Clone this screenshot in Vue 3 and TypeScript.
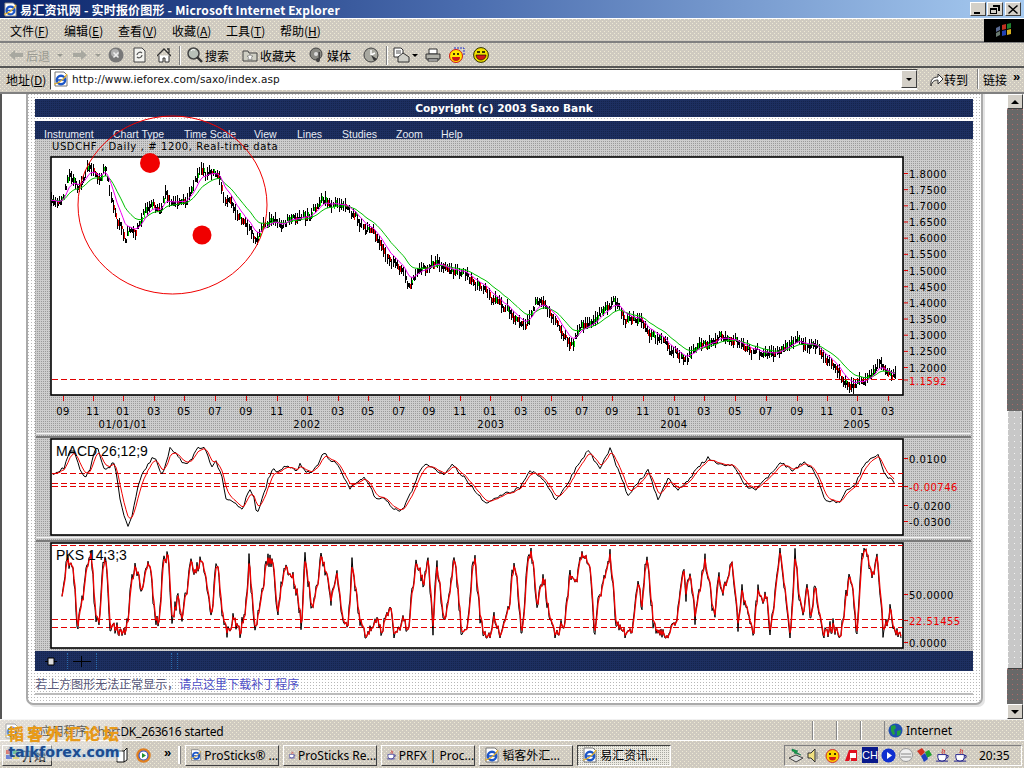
<script setup lang="ts">
// USD/CHF applet inside an old IE window; series come from points read off the chart
type Pt = [number, number]

function makeRng(seed: number) {
  let s = seed
  return () => {
    s = (s + 0x6d2b79f5) | 0
    let t = Math.imul(s ^ (s >>> 15), 1 | s)
    t = (t + Math.imul(t ^ (t >>> 7), 61 | t)) ^ t
    return ((t ^ (t >>> 14)) >>> 0) / 4294967296
  }
}

function at(pts: Pt[], x: number) {
  for (let i = 1; i < pts.length; i++) {
    if (x <= pts[i][0]) {
      const [x0, y0] = pts[i - 1]
      const [x1, y1] = pts[i]
      return y0 + ((y1 - y0) * (x - x0)) / (x1 - x0 || 1)
    }
  }
  return pts[pts.length - 1][1]
}

function ema(values: number[], n: number) {
  const k = 2 / (n + 1)
  let cur = values[0]
  return values.map((v) => (cur = cur + (v - cur) * k))
}

function line(xs: number[], ys: number[]) {
  return xs.map((x, i) => `${i ? 'L' : 'M'}${x} ${ys[i].toFixed(1)}`).join('')
}

const pricePts: Pt[] = [
  [51, 200], [60, 198], [68, 178], [72, 180], [78, 190], [88, 170], [92, 178], [100, 182], [105, 170], [108, 190],
  [112, 205], [115, 215], [120, 225], [125, 235], [130, 228], [138, 222], [145, 215], [150, 212], [158, 215], [165, 197],
  [172, 205], [180, 200], [190, 192], [200, 175], [208, 178], [218, 172], [224, 195], [232, 203], [240, 215], [247, 220],
  [253, 232], [256, 240], [262, 228], [270, 222], [280, 220], [290, 218], [300, 222], [310, 218], [322, 205], [335, 203],
  [350, 215], [365, 230], [380, 245], [395, 260], [408, 288], [415, 270], [430, 268], [445, 268], [460, 275], [475, 278],
  [485, 290], [497, 305], [510, 315], [525, 322], [535, 305], [545, 305], [555, 320], [570, 338], [585, 320], [600, 310],
  [612, 297], [625, 320], [640, 322], [655, 335], [670, 355], [682, 358], [695, 345], [715, 340], [732, 332], [745, 345],
  [765, 355], [780, 345], [800, 342], [815, 347], [825, 360], [838, 378], [855, 387], [870, 375], [878, 362], [885, 372], [895, 377],
]

const macdPts: Pt[] = [
  [52, 474], [57, 472], [64, 468], [70, 452], [75, 452], [80, 470], [85, 477], [90, 470], [95, 450], [98, 448], [102, 462], [105, 470],
  [110, 468], [113, 460], [117, 475], [120, 500], [125, 520], [128, 525], [132, 515], [137, 490], [142, 475], [148, 465], [152, 458], [156, 458],
  [160, 470], [163, 475], [167, 460], [170, 448], [175, 452], [180, 460], [185, 465], [192, 458], [198, 448], [203, 447], [208, 455], [212, 468],
  [216, 461], [222, 478], [226, 498], [232, 500], [238, 505], [243, 510], [247, 495], [250, 490], [254, 498], [257, 515], [262, 500], [268, 480],
  [273, 468], [278, 472], [285, 465], [292, 468], [297, 472], [300, 462], [305, 472], [312, 472], [318, 465], [323, 451], [330, 460], [338, 465],
  [345, 480], [350, 488], [358, 482], [365, 478], [370, 485], [375, 500], [385, 498], [395, 510], [403, 510], [412, 490], [420, 470], [427, 463],
  [435, 470], [445, 475], [452, 465], [462, 475], [475, 490], [487, 505], [495, 498], [510, 492], [520, 488], [530, 470], [545, 480], [555, 500],
  [565, 488], [575, 470], [588, 450], [600, 470], [610, 448], [618, 470], [628, 495], [640, 480], [648, 470], [658, 500], [668, 478], [678, 490],
  [690, 478], [700, 465], [708, 458], [720, 465], [732, 465], [745, 485], [755, 490], [770, 475], [780, 462], [792, 470], [805, 462], [815, 472],
  [825, 500], [840, 502], [847, 490], [855, 485], [865, 463], [878, 455], [885, 475], [895, 483],
]

// read from two 3x crops of the lower pane
const pksLeft: Pt[] = [
  [45, 150], [55, 65], [75, 75], [85, 230], [90, 255], [105, 160], [115, 75], [130, 45], [142, 230], [155, 235], [165, 65], [175, 50], [185, 290], [200, 258],
  [225, 295], [240, 225], [250, 110], [265, 75], [280, 170], [290, 95], [305, 70], [322, 250], [335, 235], [345, 60], [360, 40], [372, 240], [390, 170], [400, 235],
  [420, 130], [430, 45], [440, 110], [460, 45], [475, 130], [490, 240], [505, 50], [525, 240], [535, 280], [555, 240], [575, 280], [595, 190], [603, 55], [620, 285],
  [640, 170], [655, 60], [675, 65], [688, 235], [705, 90], [725, 85], [745, 150], [760, 260], [770, 40], [790, 200], [800, 175], [820, 50], [850, 180], [865, 90],
  [885, 260], [900, 262], [912, 65], [925, 170], [942, 280], [960, 290], [985, 225], [1000, 280], [1025, 200], [1040, 290], [1065, 240], [1080, 275], [1095, 130], [1105, 55],
  [1125, 130], [1140, 70], [1155, 265], [1165, 65], [1190, 260], [1220, 45], [1240, 280], [1250, 290], [1260, 240], [1275, 50],
]
const pksRight: Pt[] = [
  [0, 60], [15, 240], [30, 295], [45, 300], [55, 225], [75, 290], [100, 215], [115, 70], [125, 120], [140, 280], [160, 40], [170, 40], [185, 190], [205, 100],
  [225, 250], [240, 285], [270, 240], [285, 90], [300, 140], [320, 50], [345, 70], [358, 285], [370, 170], [385, 130], [405, 40], [425, 270], [440, 250], [455, 290],
  [475, 250], [490, 120], [500, 200], [515, 30], [535, 260], [550, 285], [575, 290], [605, 245], [625, 70], [632, 170], [645, 90], [660, 240], [690, 55], [720, 250],
  [730, 90], [740, 170], [770, 55], [790, 265], [800, 145], [815, 210], [835, 285], [850, 130], [860, 190], [875, 155], [885, 290], [915, 30], [945, 285], [960, 45],
  [970, 150], [985, 250], [995, 135], [1005, 240], [1020, 140], [1045, 285], [1075, 255], [1095, 295], [1120, 120], [1130, 125], [1145, 280], [1160, 45], [1175, 45], [1192, 115],
  [1205, 30], [1225, 290], [1245, 200], [1255, 280],
]
const pksPts: Pt[] = [
  ...pksLeft.map(([x, y]): Pt => [48 + x / 3, 540 + y / 3]),
  ...pksRight.map(([x, y]): Pt => [475 + x / 3, 540 + y / 3]),
]

const rng = makeRng(20050335)
const priceXs = Array.from({ length: 423 }, (_, i) => 51 + i * 2)
let drift = 0
const prices = priceXs.map((x) => {
  drift = drift * 0.78 + (rng() - 0.5) * 7
  return at(pricePts, x) + drift
})
const wick: string[] = []
const redBars: string[] = []
const greenBars: string[] = []
priceXs.forEach((x, i) => {
  const y = Math.round(prices[i])
  const up = 2 + Math.round(rng() * 6)
  const down = 2 + Math.round(rng() * 6)
  wick.push(`M${x + 0.5} ${y - up}V${y + down}`)
  if (i % 3 !== 2) wick.push(`M${x + 1.5} ${y - 1}V${y + 3}`)
  if (rng() < 0.55) {
    const falling = i > 0 && prices[i] > prices[i - 1]
    const len = 3 + Math.round(rng() * 4)
    ;(falling ? redBars : greenBars).push(`M${x + 1.5} ${y - 2}v${len}`)
  }
})
const wickPath = wick.join('')
const redPath = redBars.join('')
const greenPath = greenBars.join('')
const maFast = line(priceXs, ema(prices, 7))
const maSlow = line(priceXs, ema(prices, 16))

const macdXs = Array.from({ length: 422 }, (_, i) => 52 + i * 2)
const macdRaw = macdXs.map((x) => at(macdPts, x) + (rng() - 0.5) * 3)
const macdPath = line(macdXs, macdRaw)
const macdSignal = line(macdXs, ema(macdRaw, 4))

const pksXs = Array.from({ length: 840 }, (_, i) => 62 + i)
const pksRaw = pksXs.map((x) => Math.min(638, Math.max(548, at(pksPts, x) + (rng() - 0.5) * 14)))
const pksPath = line(pksXs, pksRaw)
const pksSignal = line(pksXs, ema(pksRaw, 2))

const priceAxis = ['1.8000', '1.7500', '1.7000', '1.6500', '1.6000', '1.5500', '1.5000', '1.4500', '1.4000', '1.3500', '1.3000', '1.2500', '1.2000'].map(
  (label, i) => ({ label, y: 173.5 + i * 16.17 }),
)

const monthXs = [63, 93, 123, 154, 184, 215, 246, 277, 307, 338, 368, 399, 429, 460, 490, 521, 551, 582, 612, 643, 674, 704, 735, 766, 797, 827, 857, 888]
const monthNames = ['09', '11', '01', '03', '05', '07']
const months = monthXs.map((x, i) => ({ x, label: monthNames[i % 6] }))
const years = [
  { x: 123, label: '01/01/01' },
  { x: 307, label: '2002' },
  { x: 491, label: '2003' },
  { x: 674, label: '2004' },
  { x: 857, label: '2005' },
]

const menuItems = [
  { name: '文件', key: 'F' },
  { name: '编辑', key: 'E' },
  { name: '查看', key: 'V' },
  { name: '收藏', key: 'A' },
  { name: '工具', key: 'T' },
  { name: '帮助', key: 'H' },
]

const chartMenu = ['Instrument', 'Chart Type', 'Time Scale', 'View', 'Lines', 'Studies', 'Zoom', 'Help']

const tasks = [
  { label: 'ProSticks® ...', icon: 'ie', active: false },
  { label: 'ProSticks Re...', icon: 'java', active: false },
  { label: 'PRFX | Proc...', icon: 'java', active: false },
  { label: '韬客外汇...', icon: 'ie', active: false },
  { label: '易汇资讯...', icon: 'ie', active: true },
]
</script>

<template>
  <div class="screen">
    <svg class="defs" width="0" height="0">
      <defs>
        <symbol id="ie" viewBox="0 0 16 16">
          <path d="M2 1h9l3 3v11H2z" fill="#fff" stroke="#777" />
          <circle cx="8" cy="9" r="4.2" fill="none" stroke="#1c56c8" stroke-width="2.4" />
          <path d="M4 9h8" stroke="#1c56c8" stroke-width="1.6" />
          <path d="M1 13C4 13 12 8 14 3" fill="none" stroke="#e8b020" stroke-width="1.2" />
        </symbol>
        <symbol id="java" viewBox="0 0 16 16">
          <path d="M8 1c2 2-2 3 0 5M10 2c1 1.500-1 2 0 4" fill="none" stroke="#d02020" />
          <path d="M3 7h9v3a4 4 0 0 1-4 4H7a4 4 0 0 1-4-4z" fill="#fff" stroke="#20208c" />
          <path d="M12 8h2v2l-2 1M1 14h13" fill="none" stroke="#20208c" />
        </symbol>
      </defs>
    </svg>

    <header class="titlebar">
      <svg class="title-icon" width="15" height="15"><use href="#ie" /></svg>
      <span class="title-text">易汇资讯网 - 实时报价图形 - Microsoft Internet Explorer</span>
      <div class="win-buttons">
        <button class="win-btn">
          <svg width="10" height="9"><path d="M1 7h6v2H1z" /></svg>
        </button>
        <button class="win-btn">
          <svg width="10" height="9"><path d="M3 0h7v6H8V2H3zM0 3h7v6H0zm1 2v3h5V5z" fill-rule="evenodd" /></svg>
        </button>
        <button class="win-btn close">
          <svg width="10" height="9"><path d="M1 0l4 3.500L9 0l1 1-4 3.500L10 8 9 9 5 5.500 1 9 0 8l4-3.500L0 1z" /></svg>
        </button>
      </div>
    </header>

    <nav class="menubar chrome">
      <span v-for="m in menuItems" :key="m.key" class="menu-item">{{ m.name }}(<u>{{ m.key }}</u>)</span>
      <div class="flag-box">
        <svg width="18" height="14" viewBox="0 0 18 14">
          <path d="M1 5l4-2v4l-4 2z" fill="#5a6a90" />
          <path d="M1 10l4-2v4l-4 2z" fill="#6a7a70" />
          <path d="M7 2l4-1v5l-4 1z" fill="#c03020" />
          <path d="M12 1l4-1v5l-4 1z" fill="#208030" />
          <path d="M7 8l4-1v5l-4 1z" fill="#2040b0" />
          <path d="M12 7l4-1v5l-4 1z" fill="#d8b020" />
        </svg>
      </div>
    </nav>

    <div class="toolbar chrome">
      <svg class="ml9" width="14" height="12" viewBox="0 0 14 12"><path d="M0 6l6-5v3h8v4H6v3z" fill="#a8a8a0" /></svg>
      <span class="tool-label off ml3">后退</span>
      <span class="caret ml7"></span>
      <svg class="ml10" width="14" height="12" viewBox="0 0 14 12"><path d="M14 6L8 1v3H0v4h8v3z" fill="#a8a8a0" /></svg>
      <span class="caret ml8"></span>
      <svg class="ml7" width="16" height="16" viewBox="0 0 16 16">
        <circle cx="8" cy="8" r="7.500" fill="#787878" />
        <circle cx="7" cy="6" r="4" fill="#b0b0b0" />
        <path d="M5.500 5.500l5 5m0-5l-5 5" stroke="#eee" stroke-width="1.500" />
      </svg>
      <svg class="ml9" width="13" height="16" viewBox="0 0 13 16">
        <path d="M1 1h8l3 3v11H1z" fill="#f4f4f0" stroke="#444" />
        <path d="M4 8a3 3 0 0 1 5-2M9 8a3 3 0 0 1-5 2" fill="none" stroke="#555" stroke-width="1.200" />
      </svg>
      <svg class="ml11" width="14" height="15" viewBox="0 0 14 15">
        <path d="M0 8l7-7 7 7M10 1h2v4" fill="none" stroke="#333" stroke-width="1.300" />
        <path d="M2 7.500V14h4v-4h2v4h4V7.500" fill="#fff" stroke="#333" />
      </svg>
      <span class="tool-sep ml8"></span>
      <svg class="ml7" width="16" height="16" viewBox="0 0 16 16">
        <circle cx="6.500" cy="6.500" r="5.500" fill="#b8c0b8" stroke="#444" stroke-width="1.500" />
        <path d="M4 4a3 3 0 0 1 4-1" fill="none" stroke="#fff" />
        <path d="M10 10l5 5" stroke="#333" stroke-width="2.400" />
      </svg>
      <span class="tool-label ml2">搜索</span>
      <svg class="ml13" width="16" height="14" viewBox="0 0 16 14">
        <path d="M1 3h5l1 2h8v8H1z" fill="#cfcfc4" stroke="#444" />
        <path d="M8 6l1 2h2l-1.500 1.500L10 12l-2-1-2 1 .500-2.500L5 8h2z" fill="#fff" stroke="#555" stroke-width=".5" />
      </svg>
      <span class="tool-label ml2">收藏夹</span>
      <svg class="ml13" width="16" height="16" viewBox="0 0 16 16">
        <circle cx="7" cy="7" r="6" fill="#8a8a84" stroke="#444" />
        <circle cx="7" cy="7" r="2" fill="#ddd" />
        <path d="M11 5v8a2 2 0 1 1-1.500-1.800V5z" fill="#444" />
      </svg>
      <span class="tool-label ml2">媒体</span>
      <svg class="ml12" width="16" height="16" viewBox="0 0 16 16">
        <circle cx="8" cy="8" r="7" fill="#a8a8a0" stroke="#444" />
        <path d="M8 8V3M8 8l4-2" stroke="#fff" stroke-width="1.400" />
        <path d="M8 8l6 4-3 2z" fill="#333" />
      </svg>
      <span class="tool-sep ml7"></span>
      <svg class="ml6" width="17" height="16" viewBox="0 0 17 16">
        <path d="M1 1h7l2 2v7H1z" fill="#fff" stroke="#333" />
        <path d="M3 4h5M3 6h5" stroke="#555" />
        <path d="M5 15V10l5-4 6 4v5z" fill="#cfcfc8" stroke="#333" />
      </svg>
      <span class="caret dark ml2"></span>
      <svg class="ml7" width="16" height="14" viewBox="0 0 16 14">
        <path d="M4 1h8v5H4z" fill="#fff" stroke="#333" />
        <path d="M1 6h14v5H1z" fill="#b0b0a8" stroke="#333" />
        <path d="M3 11h10v2H3z" fill="#fff" stroke="#333" />
      </svg>
      <svg class="ml8" width="16" height="16" viewBox="0 0 16 16">
        <path d="M5 1h10v7" fill="none" stroke="#2030c8" stroke-dasharray="2 1" />
        <circle cx="7" cy="9" r="6.500" fill="#ffe800" stroke="#d01818" />
        <circle cx="5" cy="7" r="1" />
        <circle cx="9" cy="7" r="1" />
        <path d="M3 10h8a4 4 0 0 1-8 0z" fill="#d01818" />
      </svg>
      <svg class="ml8" width="16" height="16" viewBox="0 0 16 16">
        <circle cx="8" cy="8" r="7.400" fill="#f0e000" stroke="#303000" />
        <path d="M4 5h3M9 5h3" stroke="#000" stroke-width="1.500" />
        <path d="M3 8h10a5 5 0 0 1-10 0z" fill="#d01818" stroke="#000" stroke-width=".6" />
      </svg>
    </div>

    <div class="addressbar chrome">
      <span class="addr-label">地址(<u>D</u>)</span>
      <div class="addr-input">
        <svg width="16" height="16"><use href="#ie" /></svg>
        <span class="addr-url">http://www.ieforex.com/saxo/index.asp</span>
        <button class="addr-drop"><span class="caret dark"></span></button>
      </div>
      <svg class="go-icon" width="14" height="16" viewBox="0 0 14 16">
        <path d="M2 15C1 9 4 6 9 6V3l5 5-5 5V9C6 9 3 10 2 15z" fill="#fff" stroke="#333" />
      </svg>
      <span class="go-label">转到</span>
      <span class="links-sep"></span>
      <span class="links-label">链接</span>
      <span class="links-more">»</span>
    </div>

    <main class="viewport">
      <div class="page">
        <section class="card">
          <h1 class="bank-title">Copyright (c) 2003 Saxo Bank</h1>
          <div class="chart-menu">
            <span v-for="item in chartMenu" :key="item" class="chart-menu-item">{{ item }}</span>
          </div>

          <div class="chart-body">
            <div class="chart-caption">USDCHF , Daily , # 1200, Real-time data</div>

            <svg class="pane" width="938" height="277" viewBox="35 156 938 277">
              <rect x="51" y="157" width="852" height="238" fill="#fff" stroke="#000" stroke-width="1.600" />
              <path :d="wickPath" stroke="#000" />
              <path :d="redPath" stroke="#f00000" />
              <path :d="greenPath" stroke="#00e000" />
              <path :d="maSlow" fill="none" stroke="#00c000" />
              <path :d="maFast" fill="none" stroke="#f000f0" />
              <path d="M52 379.500H903" stroke="#e00000" stroke-dasharray="6 3" />
              <g v-for="t in priceAxis" :key="t.label">
                <path :d="`M904 ${t.y}h4`" stroke="#e00000" />
                <text class="axis" x="909" :y="t.y + 4">{{ t.label }}</text>
              </g>
              <path d="M904 380h4" stroke="#e00000" />
              <text class="axis red" x="909" y="384.500">1.1592</text>
              <g v-for="m in months" :key="m.x">
                <path :d="`M${m.x + 0.5} 396v5`" stroke="#e00000" />
                <text class="axis mid" :x="m.x" y="415">{{ m.label }}</text>
              </g>
              <text v-for="y in years" :key="y.x" class="axis mid" :x="y.x" y="428">{{ y.label }}</text>
            </svg>

            <div class="divider"></div>

            <svg class="pane" width="938" height="99" viewBox="35 438 938 99">
              <rect x="51" y="439" width="852" height="96" fill="#fff" stroke="#000" stroke-width="1.600" />
              <path d="M52 473.500H903M52 483.500H903M52 486.500H903" stroke="#e00000" stroke-dasharray="6 3" />
              <path :d="macdPath" fill="none" stroke="#000" />
              <path :d="macdSignal" fill="none" stroke="#f00000" />
              <text class="pane-name" x="56" y="456">MACD 26;12;9</text>
              <path d="M904 458.500h4M904 486.500h4M904 505.500h4M904 521.500h4" stroke="#e00000" />
              <text class="axis" x="909" y="462.500">0.0100</text>
              <text class="axis red" x="909" y="490.500">-0.00746</text>
              <text class="axis" x="909" y="509.500">-0.0200</text>
              <text class="axis" x="909" y="525.500">-0.0300</text>
            </svg>

            <div class="divider short"></div>

            <svg class="pane" width="938" height="109" viewBox="35 542 938 109">
              <rect x="51" y="543" width="852" height="105" fill="#fff" stroke="#000" stroke-width="1.600" />
              <path d="M52 545.500H903M52 619.500H903M52 627.500H903" stroke="#e00000" stroke-dasharray="6 3" />
              <path :d="pksPath" fill="none" stroke="#000" />
              <path :d="pksSignal" fill="none" stroke="#f00000" stroke-width="1.300" />
              <text class="pane-name" x="56" y="560">PKS 14;3;3</text>
              <path d="M904 594.500h4M904 620.500h4M904 642.500h4" stroke="#e00000" />
              <text class="axis" x="909" y="598.500">50.0000</text>
              <text class="axis red" x="909" y="624.500">22.51455</text>
              <text class="axis" x="909" y="646.500">0.0000</text>
            </svg>
          </div>

          <div class="bottom-bar">
            <span class="bar-slot first">
              <svg width="12" height="9" viewBox="0 0 12 9"><path d="M0 4.500h12" stroke="#000" /><path d="M3 1h6v7H3z" fill="#ddd" stroke="#000" /></svg>
            </span>
            <span class="bar-slot second">
              <svg width="18" height="11" viewBox="0 0 18 11"><path d="M0 5.500h18M8.500 0v11" stroke="#000" /></svg>
            </span>
            <span class="bar-slot third"></span>
            <span class="bar-slot fourth"></span>
          </div>

          <p class="patch-note">若上方图形无法正常显示，<a class="patch-link">请点这里下载补丁程序</a></p>
          <hr class="card-rule" />
        </section>
      </div>

      <aside class="scrollbar">
        <button class="scroll-btn"><span class="arrow up"></span></button>
        <div class="scroll-track top"></div>
        <div class="scroll-thumb"></div>
        <div class="scroll-track bottom"></div>
        <button class="scroll-btn"><span class="arrow"></span></button>
      </aside>
    </main>

    <div class="statusbar chrome">
      <svg class="status-icon" width="16" height="16"><use href="#ie" /></svg>
      <span class="status-text">小应用程序 ChartDK_263616 started</span>
      <span class="status-pane"></span>
      <span class="status-pane"></span>
      <span class="status-pane"></span>
      <span class="status-zone">
        <svg width="15" height="15" viewBox="0 0 15 15">
          <circle cx="7.500" cy="7.500" r="7" fill="#2050b0" />
          <path d="M3 3l4-1 1 3-2 2 1 4-2 1-2-4zM9 8l4-1-1 5-3 1z" fill="#20a040" />
        </svg>
        Internet
      </span>
    </div>

    <footer class="taskbar chrome">
      <button class="start-btn">
        <svg width="14" height="12" viewBox="0 0 14 12"><path d="M0 1h6v4H0z" fill="#d03020" /><path d="M7 1h6v4H7z" fill="#20a030" /><path d="M0 6h6v4H0z" fill="#2040c0" /><path d="M7 6h6v4H7z" fill="#e0c020" /></svg>
        <b>开始</b>
      </button>
      <svg class="quick first" width="12" height="16" viewBox="0 0 12 16"><path d="M1 4h7l3-3v12l-3 2H1z" fill="#fff" stroke="#111" /><path d="M8 4v11" stroke="#111" /></svg>
      <svg class="quick" width="15" height="15" viewBox="0 0 15 15">
        <circle cx="7.500" cy="7.500" r="6" fill="#fff" stroke="#e08020" stroke-width="2.500" />
        <circle cx="7.500" cy="7.500" r="4.500" fill="none" stroke="#3050c0" stroke-width="1.200" />
        <path d="M6 5l4 2.500L6 10z" fill="#209030" />
      </svg>
      <span class="quick-more">»</span>
      <span class="grip"></span>
      <div class="tasks">
        <button v-for="t in tasks" :key="t.label" class="task" :class="{ active: t.active }">
          <svg width="16" height="16"><use :href="`#${t.icon}`" /></svg>
          <span>{{ t.label }}</span>
        </button>
      </div>
      <div class="tray">
        <svg width="16" height="15" viewBox="0 0 16 15"><path d="M1 10l7-3 7 3-7 4z" fill="#ddd" stroke="#444" /><path d="M4 1l6 2-2 1 5 3-7-2 1-1-3-1z" fill="#10a040" stroke="#064" stroke-width=".5" /></svg>
        <svg width="12" height="15" viewBox="0 0 12 15"><path d="M1 5h3l4-4v13l-4-4H1z" fill="#f0e080" stroke="#333" /><path d="M10 4v7" stroke="#777" /></svg>
        <svg class="tray-gap" width="15" height="15" viewBox="0 0 15 15"><circle cx="7.500" cy="8" r="6.500" fill="#fbd400" stroke="#d03030" /><circle cx="5" cy="6" r="1" /><circle cx="10" cy="6" r="1" /><path d="M4 9h7a3.500 3.500 0 0 1-7 0z" fill="#d01818" /></svg>
        <svg width="16" height="14" viewBox="0 0 16 14"><path d="M2 13L6 2h8v11H8V9L6 13z" fill="#e01020" /><path d="M7 5h6v5H7z" fill="#fff" /></svg>
        <span class="ch-tag">CH</span>
        <svg width="15" height="15" viewBox="0 0 15 15"><circle cx="7.500" cy="7.500" r="7" fill="#1030d0" /><path d="M6 4l5 3.500L6 11z" fill="#fff" /></svg>
        <svg width="14" height="14" viewBox="0 0 14 14"><circle cx="7" cy="7" r="6.500" fill="#eee" stroke="#999" /><path d="M2 6h10M2 9h10" stroke="#888" /></svg>
        <svg width="16" height="16" viewBox="0 0 16 16"><path d="M1 4l5-3 3 4-4 4z" fill="#d03020" /><path d="M9 5l4-2 3 5-5 3z" fill="#20a030" /><path d="M5 9l4-3 3 6-4 3z" fill="#2040c0" /></svg>
        <svg width="15" height="15"><use href="#java" /></svg>
        <svg width="15" height="15"><use href="#java" /></svg>
        <span class="clock">20:35</span>
      </div>
    </footer>

    <!-- hand drawn marks that sit on top of the chart -->
    <svg class="marks" width="1024" height="768" viewBox="0 0 1024 768">
      <ellipse cx="172.500" cy="205" rx="94.500" ry="89" fill="none" stroke="#f00000" />
      <circle cx="150" cy="163" r="10" fill="#f00000" />
      <circle cx="202" cy="235" r="9.500" fill="#f00000" />
    </svg>

    <!-- site watermark over the lower left corner -->
    <div class="watermark">
      <span class="wm-cn">韬客外汇论坛</span>
      <span class="wm-en">talkforex.com</span>
    </div>
  </div>
</template>

<style scoped>
.screen {
  position: relative;
  width: 1024px;
  height: 768px;
  overflow: hidden;
  display: flex;
  flex-direction: column;
  font-family: 'Liberation Sans', 'Noto Sans CJK SC', sans-serif;
  font-size: 12px;
  color: #000;
  background: #d4d0c8;
}

.defs {
  position: absolute;
}

u {
  text-decoration: underline;
}

button {
  padding: 0;
  font: inherit;
  color: inherit;
}

/* dithered gif look of the window chrome */
.chrome {
  background-color: #cfcac0;
  background-image: radial-gradient(circle at 0.5px 0.5px, #eee9d4 0.7px, transparent 0.8px),
    radial-gradient(circle at 0.5px 0.5px, #eee9d4 0.7px, transparent 0.8px);
  background-size: 4px 4px;
  background-position: 0 0, 2px 2px;
  flex-shrink: 0;
}

/* Title bar */
.titlebar {
  height: 18px;
  flex-shrink: 0;
  display: flex;
  align-items: center;
  padding: 0 3px;
  background: linear-gradient(90deg, #0a246a 0%, #4a6cae 45%, #a6caf0 100%);
  color: #fff;
}

.title-text {
  margin-left: 2px;
  font-family: 'Noto Sans CJK SC', 'Liberation Sans', sans-serif;
  font-size: 12px;
  font-weight: 700;
  letter-spacing: 0.2px;
  white-space: nowrap;
}

.win-buttons {
  margin-left: auto;
  display: flex;
  gap: 1px;
  margin-right: 0;
}

.win-btn {
  width: 16px;
  height: 14px;
  background: #d4d0c8;
  border: 1px solid;
  border-color: #fff #404040 #404040 #fff;
  display: flex;
  align-items: center;
  justify-content: center;
}

.win-btn.close {
  margin-left: 1px;
}

/* Menu bar */
.menubar {
  height: 25px;
  display: flex;
  align-items: center;
  gap: 15px;
  padding-left: 10px;
  border-top: 1px solid #fff;
  border-bottom: 2px solid #808080;
  box-sizing: border-box;
}

.menu-item {
  width: 39px;
  white-space: nowrap;
  font-family: 'Noto Sans CJK SC', sans-serif;
}

.flag-box {
  margin-left: auto;
  width: 40px;
  height: 23px;
  background: #000;
  display: flex;
  align-items: center;
  justify-content: center;
}

/* Toolbar */
.toolbar {
  height: 25px;
  display: flex;
  align-items: center;
  padding-top: 1px;
  border-bottom: 2px solid #555;
  box-sizing: border-box;
}

.toolbar svg {
  flex-shrink: 0;
}

.tool-label {
  font-family: 'Noto Sans CJK SC', sans-serif;
  white-space: nowrap;
}

.tool-label.off {
  color: #9a9a92;
}

.tool-sep {
  width: 1px;
  height: 19px;
  background: #808080;
  box-shadow: 1px 0 0 #fff;
}

.caret {
  display: inline-block;
  width: 0;
  height: 0;
  border-left: 3px solid transparent;
  border-right: 3px solid transparent;
  border-top: 3px solid #9a9a92;
}

.caret.dark {
  border-top-color: #000;
}

.ml2 { margin-left: 2px; }
.ml3 { margin-left: 3px; }
.ml6 { margin-left: 6px; }
.ml7 { margin-left: 7px; }
.ml8 { margin-left: 8px; }
.ml9 { margin-left: 9px; }
.ml10 { margin-left: 10px; }
.ml11 { margin-left: 11px; }
.ml12 { margin-left: 12px; }
.ml13 { margin-left: 13px; }

/* Address bar */
.addressbar {
  height: 26px;
  display: flex;
  align-items: center;
  padding-left: 6px;
  padding-bottom: 2px;
  box-sizing: border-box;
  border-bottom: 2px solid #808080;
}

.addr-label {
  width: 44px;
  font-family: 'Noto Sans CJK SC', sans-serif;
  white-space: nowrap;
}

.addr-input {
  width: 868px;
  height: 21px;
  box-sizing: border-box;
  background: #fff;
  border: 1px solid;
  border-color: #404040 #d4d0c8 #fff #404040;
  display: flex;
  align-items: center;
  padding-left: 2px;
}

.addr-url {
  margin-left: 3px;
  font-family: 'DejaVu Sans', sans-serif;
  font-size: 10.5px;
  letter-spacing: 0.1px;
  color: #111;
}

.addr-drop {
  margin-left: auto;
  width: 16px;
  height: 18px;
  background: #d4d0c8;
  border: 1px solid;
  border-color: #fff #404040 #404040 #fff;
  display: flex;
  align-items: center;
  justify-content: center;
}

.go-icon {
  margin-left: 11px;
}

.go-label {
  margin-left: 1px;
  font-family: 'Noto Sans CJK SC', sans-serif;
}

.links-sep {
  width: 1px;
  height: 20px;
  margin-left: 9px;
  background: #808080;
  box-shadow: 1px 0 0 #fff;
}

.links-label {
  margin-left: 5px;
  font-family: 'Noto Sans CJK SC', sans-serif;
}

.links-more {
  margin-left: 6px;
  margin-top: -6px;
  font-size: 13px;
  font-weight: 700;
}

/* Browser viewport */
.viewport {
  height: 625px;
  flex-shrink: 0;
  display: flex;
  background: #fff;
  border-left: 2px solid #555;
  box-sizing: border-box;
  overflow: hidden;
}

.page {
  flex: 1;
  min-width: 0;
}

.card {
  width: 957px;
  height: 619px;
  margin: -8px 0 0 24px;
  padding: 11px 8px 0 7px;
  box-sizing: border-box;
  border: 2px solid #aaa;
  border-radius: 7px;
  background-color: #fff;
  background-image: radial-gradient(circle at 0.5px 0.5px, #b8b8b8 0.7px, transparent 0.8px);
  background-size: 3px 3px;
  box-shadow: 2px 2px 0 #e4e4e4;
}

.bank-title {
  margin: 0;
  height: 18px;
  line-height: 18px;
  text-align: center;
  font-family: 'DejaVu Sans', sans-serif;
  font-size: 10.6px;
  font-weight: 700;
  color: #fff;
  background-color: #1d2f60;
  background-image: radial-gradient(circle at 0.5px 0.5px, #15244c 0.7px, transparent 0.8px);
  background-size: 2px 2px;
}

.chart-menu {
  margin-top: 4px;
  height: 18px;
  display: flex;
  align-items: flex-end;
  background-color: #1d2f60;
  background-image: radial-gradient(circle at 0.5px 0.5px, #15244c 0.7px, transparent 0.8px);
  background-size: 2px 2px;
  padding-left: 9px;
}

.chart-menu-item {
  font-size: 10.5px;
  line-height: 10px;
  color: #e8ecf4;
  white-space: nowrap;
}

.chart-menu-item:nth-child(1) { width: 69px; }
.chart-menu-item:nth-child(2) { width: 71px; }
.chart-menu-item:nth-child(3) { width: 70px; }
.chart-menu-item:nth-child(4) { width: 43px; }
.chart-menu-item:nth-child(5) { width: 45px; }
.chart-menu-item:nth-child(6) { width: 54px; }
.chart-menu-item:nth-child(7) { width: 45px; }

.chart-body {
  height: 512px;
  background-color: #cdcdcd;
  background-image: radial-gradient(circle at 0.5px 0.5px, #9a9a9a 0.7px, transparent 0.8px);
  background-size: 2px 2px;
  display: flex;
  flex-direction: column;
}

.chart-caption {
  height: 17px;
  line-height: 15px;
  padding-left: 17px;
  font-family: 'DejaVu Sans', sans-serif;
  font-size: 10px;
  letter-spacing: 0.6px;
  white-space: nowrap;
  color: #000;
}

.pane {
  display: block;
  flex-shrink: 0;
}

.axis {
  font-family: 'DejaVu Sans', sans-serif;
  font-size: 10px;
  letter-spacing: 0.5px;
  fill: #000;
}

.axis.red {
  fill: #f00000;
}

.axis.mid {
  text-anchor: middle;
}

.pane-name {
  font-family: 'Liberation Sans', sans-serif;
  font-size: 14px;
  fill: #000;
}

.divider {
  height: 5px;
  box-sizing: border-box;
  margin-left: 1px;
  margin-right: 2px;
  border-top: 1px solid #f4f4f4;
  border-bottom: 2px solid #7a7a7a;
}

.divider.short {
  height: 5px;
}

/* Strip under the chart */
.bottom-bar {
  height: 20px;
  display: flex;
  align-items: center;
  background-color: #1d2f60;
  background-image: radial-gradient(circle at 0.5px 0.5px, #15244c 0.7px, transparent 0.8px);
  background-size: 2px 2px;
}

.bar-slot {
  height: 16px;
  display: flex;
  align-items: center;
  justify-content: center;
  box-sizing: border-box;
  border-right: 1px dotted #2a6cae;
}

.bar-slot.first {
  width: 33px;
}

.bar-slot.second {
  width: 29px;
}

.bar-slot.third {
  width: 75px;
}

.bar-slot.fourth {
  width: 6px;
}

.patch-note {
  margin: 6px 0 0;
  height: 14px;
  font-family: 'Noto Sans CJK SC', sans-serif;
  font-size: 12px;
  line-height: 14px;
  color: #58587a;
  white-space: nowrap;
}

.patch-link {
  color: #5050c8;
}

.card-rule {
  margin: 2px 0 0;
  border: 0;
  height: 2px;
  background: #bcbcbc;
}

/* Scrollbar */
.scrollbar {
  width: 16px;
  margin-right: 1px;
  display: flex;
  flex-direction: column;
  flex-shrink: 0;
}

.scroll-btn {
  height: 15px;
  flex-shrink: 0;
  background: #d4d0c8;
  border: 1px solid;
  border-color: #fff #404040 #404040 #fff;
  display: flex;
  align-items: center;
  justify-content: center;
}

.arrow {
  width: 0;
  height: 0;
  border-left: 4px solid transparent;
  border-right: 4px solid transparent;
  border-top: 4px solid #000;
}

.arrow.up {
  border-top: 0;
  border-bottom: 4px solid #000;
}

.scroll-track {
  background-color: #686868;
  background-image: radial-gradient(circle at 0.5px 0.5px, #b06868 0.7px, transparent 0.8px);
  background-size: 5px 5px;
}

.scroll-track.top {
  height: 302px;
}

.scroll-track.bottom {
  flex: 1;
}

.scroll-thumb {
  height: 258px;
  box-sizing: border-box;
  background-color: #c8c8c8;
  background-image: radial-gradient(circle at 0.5px 0.5px, #f4f4f4 0.7px, transparent 0.8px);
  background-size: 6px 6px;
  border-left: 1px solid #fff;
  border-right: 1px solid #404040;
  border-bottom: 1px solid #404040;
}

/* Status bar */
.statusbar {
  height: 22px;
  display: flex;
  align-items: center;
  padding-top: 1px;
  border-top: 1px solid #f0f0f0;
  border-bottom: 1px solid #fff;
  box-sizing: border-box;
  padding-left: 4px;
}

.status-text {
  margin-left: 8px;
  width: 784px;
  font-family: 'Noto Sans', 'Noto Sans CJK SC', sans-serif;
  letter-spacing: -0.17px;
  white-space: nowrap;
}

.status-pane {
  width: 24px;
  height: 19px;
  box-sizing: border-box;
  border-left: 1px solid #888;
  box-shadow: inset 1px 0 0 #fff;
}

.status-zone {
  display: flex;
  align-items: center;
  gap: 3px;
  height: 19px;
  padding-left: 3px;
  border-left: 1px solid #888;
  font-family: 'Noto Sans', sans-serif;
  font-size: 12px;
}

/* Taskbar */
.taskbar {
  height: 28px;
  display: flex;
  align-items: center;
  padding: 0 2px;
  box-sizing: border-box;
}

.start-btn {
  width: 50px;
  height: 21px;
  flex-shrink: 0;
  display: flex;
  align-items: center;
  gap: 2px;
  padding-left: 3px;
  background: transparent;
  border: 1px solid;
  border-color: #fff #404040 #404040 #fff;
  font-family: 'Noto Sans CJK SC', sans-serif;
}

.quick {
  flex-shrink: 0;
  margin-left: 8px;
}

.quick.first {
  margin-left: 64px;
}

.quick-more {
  margin-left: 13px;
  margin-top: -6px;
  font-size: 13px;
  font-weight: 700;
}

.grip {
  width: 2px;
  height: 18px;
  margin-left: 7px;
  background: #fff;
  border-right: 1px solid #808080;
  flex-shrink: 0;
}

.tasks {
  display: flex;
  gap: 4px;
  margin-left: 4px;
}

.task {
  width: 94px;
  height: 21px;
  display: flex;
  align-items: center;
  gap: 2px;
  padding-left: 4px;
  box-sizing: border-box;
  background: transparent;
  border: 1px solid;
  border-color: #fff #404040 #404040 #fff;
  font-family: 'Noto Sans', 'Noto Sans CJK SC', sans-serif;
  font-size: 12px;
  white-space: nowrap;
  overflow: hidden;
  flex-shrink: 0;
}

.task.active {
  border-color: #404040 #fff #fff #404040;
  background-color: #eceae2;
  background-image: radial-gradient(circle at 0.5px 0.5px, #a8a8a0 0.7px, transparent 0.8px);
  background-size: 2px 2px;
}

.tray {
  margin-left: auto;
  width: 238px;
  height: 21px;
  box-sizing: border-box;
  display: flex;
  align-items: center;
  gap: 3px;
  padding-left: 3px;
  border: 1px solid;
  border-color: #808080 #fff #fff #808080;
}

.tray svg {
  flex-shrink: 0;
}

.tray-gap {
  margin-left: 3px;
}

.ch-tag {
  width: 16px;
  height: 16px;
  background: #0a1a8c;
  color: #fff;
  font-size: 11px;
  line-height: 16px;
  text-align: center;
  flex-shrink: 0;
}

.clock {
  margin-left: 8px;
  font-family: 'Noto Sans', sans-serif;
  font-size: 12px;
}

/* Overlays */
.marks {
  position: absolute;
  left: 0;
  top: 0;
  pointer-events: none;
}

.watermark {
  position: absolute;
  left: 0;
  top: 719px;
  width: 122px;
  height: 42px;
  background: rgba(255, 255, 255, 0.35);
  display: flex;
  flex-direction: column;
  align-items: center;
  overflow: hidden;
}

.wm-cn {
  margin-top: 4px;
  margin-left: 8px;
  font-family: 'Noto Sans CJK SC', sans-serif;
  font-size: 16px;
  line-height: 20px;
  font-weight: 900;
  letter-spacing: 3px;
  color: #e89a18;
  white-space: nowrap;
}

.wm-en {
  margin-top: 1px;
  margin-left: 6px;
  font-family: 'DejaVu Sans', sans-serif;
  font-size: 14.3px;
  line-height: 16px;
  font-weight: 700;
  color: #1c4c90;
  text-shadow: 0 0 3px #8ac0ee;
  white-space: nowrap;
}
</style>
